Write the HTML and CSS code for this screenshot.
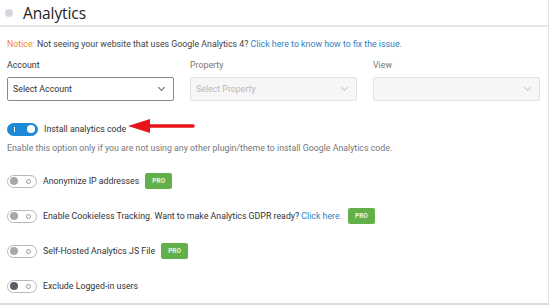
FILE: index.html
```html
<!DOCTYPE html>
<html lang="en">

<head>
    <meta charset="UTF-8">
    <meta name="viewport" content="width=device-width, initial-scale=1.0">
    <title>Analytics</title>
    <link rel="stylesheet" href="styles.css">
</head>

<body>
    <div class="panel">
        <!-- Header -->
        <div class="panel-header">
            <span class="dot"></span>
            <h2>Analytics</h2>
        </div>

        <div class="panel-body">
            <p class="notice"><span class="notice-label">Notice:</span> Not seeing your website that uses Google Analytics 4? <a href="#">Click here to know how to fix the issue.</a></p>

            <!-- Selects -->
            <div class="selects">
                <div class="field">
                    <label>Account</label>
                    <div class="select">Select Account<span class="chev"></span></div>
                </div>
                <div class="field">
                    <label>Property</label>
                    <div class="select disabled">Select Property<span class="chev"></span></div>
                </div>
                <div class="field">
                    <label>View</label>
                    <div class="select disabled"><span class="chev"></span></div>
                </div>
            </div>

            <!-- Options -->
            <div class="option first">
                <span class="toggle on"><span class="knob"></span></span>
                <span class="option-text">Install analytics code</span>
                <svg class="arrow" width="70" height="18" viewBox="0 0 70 18">
                    <path d="M66 8 H20" stroke="#e8141b" stroke-width="3.5" stroke-linecap="round" />
                    <path d="M1 8 L23 1 L23 15 Z" fill="#e8141b" />
                </svg>
            </div>
            <p class="hint">Enable this option only if you are not using any other plugin/theme to install Google Analytics code.</p>

            <div class="option">
                <span class="toggle"><span class="knob"></span></span>
                <span class="option-text">Anonymize IP addresses</span>
                <span class="pro">PRO</span>
            </div>
            <div class="option">
                <span class="toggle"><span class="knob"></span></span>
                <span class="option-text">Enable Cookieless Tracking. Want to make Analytics GDPR ready? <a href="#">Click here.</a></span>
                <span class="pro">PRO</span>
            </div>
            <div class="option">
                <span class="toggle"><span class="knob"></span></span>
                <span class="option-text">Self-Hosted Analytics JS File</span>
                <span class="pro">PRO</span>
            </div>
            <div class="option">
                <span class="toggle dark"><span class="knob"></span></span>
                <span class="option-text">Exclude Logged-in users</span>
            </div>
        </div>
    </div>
</body>

</html>
```

FILE: styles.css
```css
* {
    box-sizing: border-box;
    margin: 0;
    padding: 0;
}

body {
    font-family: Roboto, "Open Sans", sans-serif;
    background-color: #fff;
    color: #3a3a3a;
    width: 550px;
    height: 305px;
    overflow: hidden;
}

.panel {
    width: 549px;
    height: 305px;
    border-right: 1px solid #e2e2e2;
    border-bottom: 2px solid #dcdcdc;
}

.panel-header {
    display: flex;
    align-items: center;
    height: 27px;
    padding-left: 5px;
    border-bottom: 2px solid #e6e6e6;
}

.dot {
    width: 8px;
    height: 8px;
    border-radius: 50%;
    background-color: #d4d7db;
    margin-right: 10px;
}

.panel-header h2 {
    font-family: "Open Sans", sans-serif;
    font-size: 15.5px;
    font-weight: 400;
    color: #222;
    letter-spacing: -0.1px;
}

.panel-body {
    padding: 10px 7px 0;
}

.notice {
    font-size: 8.8px;
    color: #444;
    line-height: 14px;
}

.notice-label {
    color: #f08a24;
}

a {
    color: #2f7fc1;
    text-decoration: none;
}

.selects {
    display: flex;
    gap: 16px;
    margin-top: 9px;
}

.field {
    width: 167px;
}

.field label {
    display: block;
    font-size: 8.8px;
    color: #333;
    height: 13px;
    margin-bottom: 4px;
}

.field:nth-child(2) label,
.field:nth-child(3) label {
    color: #777;
}

.select {
    position: relative;
    height: 24px;
    border: 1px solid #8a8a8a;
    border-radius: 2px;
    font-size: 8.8px;
    line-height: 22px;
    padding-left: 5px;
    color: #333;
}

.select.disabled {
    border-color: #e3e3e3;
    background-color: #f6f6f6;
    color: #b8b8b8;
}

.chev {
    position: absolute;
    right: 9px;
    top: 7px;
    width: 5px;
    height: 5px;
    border-right: 1px solid #666;
    border-bottom: 1px solid #666;
    transform: rotate(45deg);
}

.select.disabled .chev {
    border-color: #c8c8c8;
}

.option {
    display: flex;
    align-items: center;
    height: 16px;
    margin-top: 19px;
    font-size: 8.8px;
    color: #333;
}

.option.first {
    margin-top: 20px;
}

.hint + .option {
    margin-top: 20px;
}

.toggle {
    position: relative;
    width: 30px;
    height: 13px;
    border-radius: 7px;
    border: 1px solid #b8b8b8;
    background-color: #fff;
    margin-right: 6px;
    flex-shrink: 0;
}

.toggle .knob {
    position: absolute;
    left: 2px;
    top: 1.5px;
    width: 8px;
    height: 8px;
    border-radius: 50%;
    background-color: #a8a8a8;
}

.toggle::after {
    content: "";
    position: absolute;
    right: 5px;
    top: 3.5px;
    width: 3px;
    height: 3px;
    border-radius: 50%;
    border: 1px solid #999;
}

.toggle.dark .knob {
    background-color: #5a5f66;
}

.toggle.on {
    width: 31px;
    border-color: #1e8ad6;
    background-color: #1e8ad6;
}

.toggle.on .knob {
    left: auto;
    right: 2px;
    background-color: #fff;
}

.toggle.on::after {
    right: auto;
    left: 6px;
    top: 3px;
    width: 1px;
    height: 5px;
    border-radius: 0;
    border: none;
    background-color: #fff;
}

.arrow {
    margin-left: 1px;
    margin-top: -4px;
}

.hint {
    font-size: 8.8px;
    color: #777;
    margin-top: 6px;
}

.pro {
    margin-left: 6px;
    background-color: #63b04a;
    color: #e8f5e1;
    font-size: 6.5px;
    font-weight: 700;
    height: 16px;
    line-height: 16px;
    padding: 0 7px;
    border-radius: 2px;
}
```
